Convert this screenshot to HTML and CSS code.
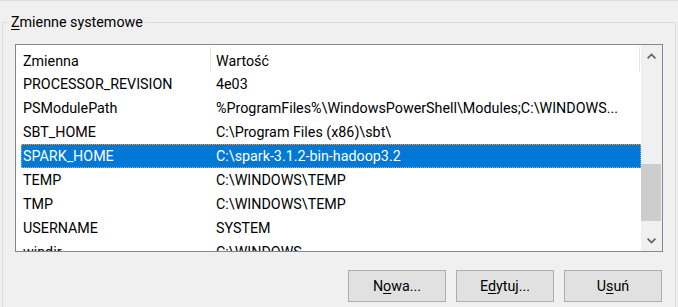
FILE: index.html
```html
<!DOCTYPE html>
<html lang="pl">
<head>
  <meta charset="UTF-8">
  <title>Zmienne systemowe</title>
  <link rel="stylesheet" href="styles.css">
</head>
<body>
  <div class="topline"></div>
  <div class="group">
    <span class="group-title"><u>Z</u>mienne systemowe</span>
    <div class="listbox">
      <div class="list">
        <div class="list-head">
          <div class="head-name">Zmienna</div>
          <div class="head-value">Wartość</div>
        </div>
        <div class="row"><div class="cell-name">PROCESSOR_REVISION</div><div class="cell-value">4e03</div></div>
        <div class="row"><div class="cell-name">PSModulePath</div><div class="cell-value">%ProgramFiles%\WindowsPowerShell\Modules;C:\WINDOWS...</div></div>
        <div class="row"><div class="cell-name">SBT_HOME</div><div class="cell-value">C:\Program Files (x86)\sbt\</div></div>
        <div class="row selected"><div class="cell-name">SPARK_HOME</div><div class="cell-value">C:\spark-3.1.2-bin-hadoop3.2</div></div>
        <div class="row"><div class="cell-name">TEMP</div><div class="cell-value">C:\WINDOWS\TEMP</div></div>
        <div class="row"><div class="cell-name">TMP</div><div class="cell-value">C:\WINDOWS\TEMP</div></div>
        <div class="row"><div class="cell-name">USERNAME</div><div class="cell-value">SYSTEM</div></div>
        <div class="row"><div class="cell-name">windir</div><div class="cell-value">C:\WINDOWS</div></div>
      </div>
      <div class="scrollbar">
        <div class="sb-btn">
          <svg width="9" height="6" viewBox="0 0 9 6"><path d="M0.6 5.4 L4.5 1.5 L8.4 5.4" fill="none" stroke="#606060" stroke-width="1.6"/></svg>
        </div>
        <div class="sb-track"><div class="sb-thumb"></div></div>
        <div class="sb-btn">
          <svg width="9" height="6" viewBox="0 0 9 6"><path d="M0.6 0.6 L4.5 4.5 L8.4 0.6" fill="none" stroke="#606060" stroke-width="1.6"/></svg>
        </div>
      </div>
    </div>
    <div class="buttons">
      <button class="btn">N<u>o</u>wa...</button>
      <button class="btn">E<u>d</u>ytuj...</button>
      <button class="btn">U<u>s</u>uń</button>
    </div>
  </div>
</body>
</html>
```

FILE: styles.css
```css
body{
  margin: 0;
  width: 678px;
  height: 307px;
  overflow: hidden;
  background: #f0f0f0;
  font-family: Roboto, "Noto Sans", sans-serif;
  font-size: 14.3px;
  color: #000;
}
.topline{
  height: 1px;
  background: #dcdcdc;
}
.group{
  position: relative;
  box-sizing: border-box;
  margin: 21px 2px 0 2px;
  height: 285px;
  border: 1px solid #dcdcdc;
  border-bottom: none;
  padding: 21px 12px 0 12px;
}
.group-title{
  position: absolute;
  left: 6px;
  top: -11px;
  padding: 0 2px;
  background: #f0f0f0;
  line-height: 20px;
}
u{
  text-underline-offset: 2px;
}
.listbox{
  display: flex;
  height: 206px;
  border: 1px solid #828790;
  background: #fff;
}
.list{
  flex: 1;
  overflow: hidden;
}
.list-head{
  display: flex;
  height: 27px;
}
.head-name,.head-value{
  display: flex;
  align-items: center;
  box-sizing: border-box;
  margin-top: 2px;
  padding-top: 2px;
  height: 25px;
  border-right: 1px solid #e5e5e5;
}
.head-name{
  width: 195px;
  padding-left: 7px;
}
.head-value{
  width: 429px;
  padding-left: 5px;
}
.row{
  display: flex;
  align-items: center;
  height: 24px;
  margin-left: 5px;
  white-space: nowrap;
}
.cell-name{
  width: 187px;
  padding-left: 2px;
}
.cell-value{
  flex: 1;
  padding-left: 6px;
  overflow: hidden;
}
.selected{
  background: #0078d7;
  color: #fff;
  outline: 1px dotted #ff9a2e;
  outline-offset: -1px;
}
.scrollbar{
  width: 21px;
  display: flex;
  flex-direction: column;
  background: #f0f0f0;
}
.sb-btn{
  height: 21px;
  display: flex;
  align-items: center;
  justify-content: center;
}
.sb-track{
  flex: 1;
}
.sb-thumb{
  margin: 98px 1px 0 0;
  height: 57px;
  background: #cdcdcd;
}
.buttons{
  display: flex;
  justify-content: flex-end;
  gap: 10px;
  margin: 18px 1px 0 0;
}
.btn{
  width: 98px;
  height: 32px;
  background: #e1e1e1;
  border: 1px solid #adadad;
  font-family: Roboto, "Noto Sans", sans-serif;
  font-size: 14.3px;
  color: #000;
  padding: 0;
}
```
